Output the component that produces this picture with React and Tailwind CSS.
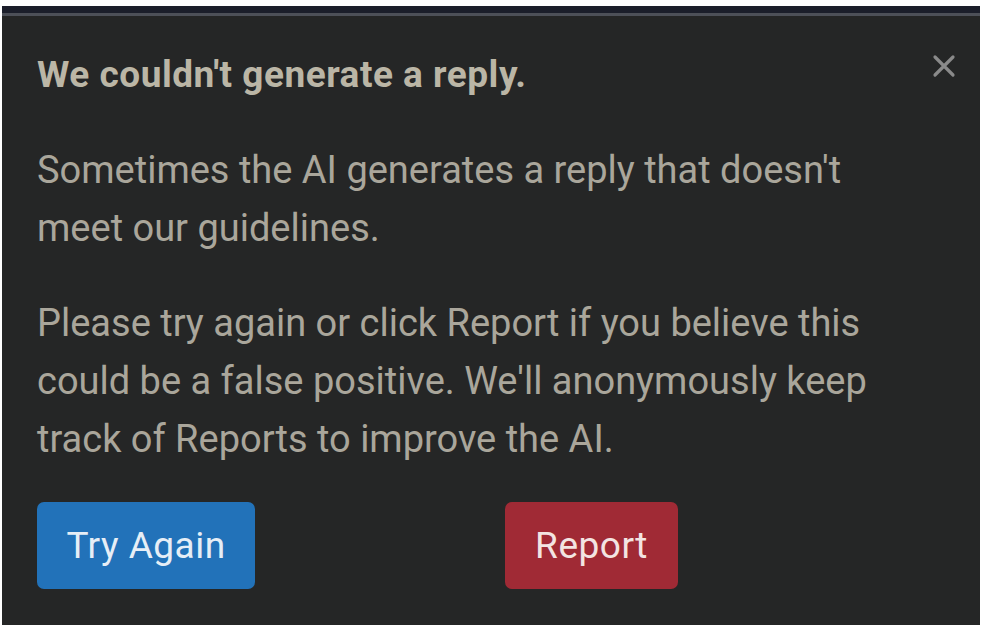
export default function App() {
  return (
    <div className="w-[985px] h-[632px] bg-white pt-[6px] pl-[2px]" style={{ fontFamily: 'Roboto, "Noto Sans", sans-serif' }}>
      <div className="w-[978px] h-[619px] bg-[#252626] flex flex-col">
        {/* top strip */}
        <div className="h-[7px] bg-[#1b1e2a]" />
        <div className="h-[3px] bg-[#4d5058]" />

        <div className="relative flex-1 pl-[35px]">
          <button className="absolute right-[24px] top-[38px] text-[#8a8a8a]">
            <svg width="24" height="24" viewBox="0 0 24 24" fill="none" stroke="currentColor" strokeWidth="3.2" strokeLinecap="round">
              <path d="M3 3L21 21M21 3L3 21" />
            </svg>
          </button>

          <h1 className="pt-[39px] text-[37px] font-bold text-[#bbb6a6] leading-[40px] tracking-[0.5px]">
            We couldn't generate a reply.
          </h1>

          <p className="mt-[46px] text-[38px] leading-[58px] text-[#aaa69b] w-[845px]">
            Sometimes the AI generates a reply that doesn't meet our guidelines.
          </p>

          <p className="mt-[37px] text-[38px] leading-[58px] text-[#aaa69b] w-[845px]">
            Please try again or click Report if you believe this could be a false positive. We'll anonymously keep track of Reports to improve the AI.
          </p>

          <div className="mt-[34px] grid grid-cols-[468px_1fr] items-start">
            <button className="w-[218px] h-[87px] rounded-[7px] bg-[#2272b9] text-[#e6eef6] text-[37px] tracking-[0.5px]">
              Try Again
            </button>
            <button className="w-[173px] h-[87px] rounded-[7px] bg-[#a02a35] text-[#f3e4e2] text-[37px] tracking-[0.5px]">
              Report
            </button>
          </div>
        </div>
      </div>
    </div>
  )
}
